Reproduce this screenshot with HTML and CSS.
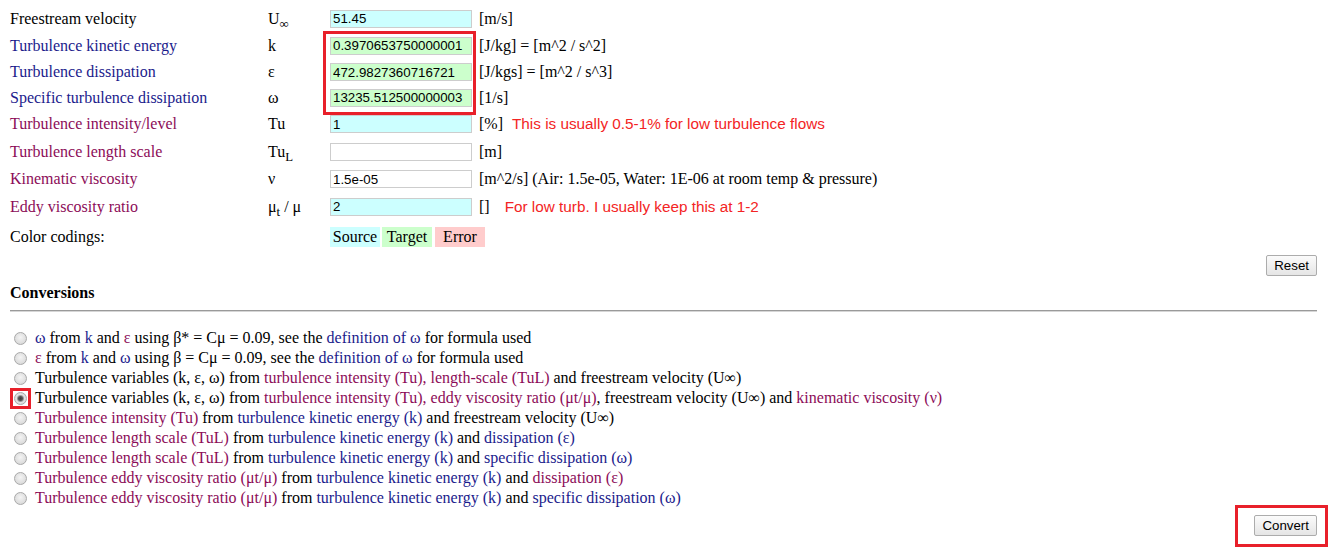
FILE: index.html
```html
<!DOCTYPE html>
<html lang="en">
  <head>
    <meta charset="UTF-8" />
    <meta name="viewport" content="width=device-width, initial-scale=1.0" />
    <title>Turbulence calculator</title>
    <link rel="stylesheet" href="styles.css">
  </head>
  <body>
    <div class="page">
      <div class="vars">
        <span>Freestream velocity</span>
        <span>U<sub>&infin;</sub></span>
        <span><input class="src" type="text" value="51.45"></span>
        <span>[m/s]</span>

        <span class="b">Turbulence kinetic energy</span>
        <span>k</span>
        <span><input class="tgt" type="text" value="0.3970653750000001"></span>
        <span>[J/kg] = [m^2 / s^2]</span>

        <span class="b">Turbulence dissipation</span>
        <span>&epsilon;</span>
        <span><input class="tgt" type="text" value="472.9827360716721"></span>
        <span>[J/kgs] = [m^2 / s^3]</span>

        <span class="b">Specific turbulence dissipation</span>
        <span>&omega;</span>
        <span><input class="tgt" type="text" value="13235.512500000003"></span>
        <span>[1/s]</span>

        <span class="m">Turbulence intensity/level</span>
        <span>Tu</span>
        <span><input class="src" type="text" value="1"></span>
        <span>[%] <span class="note">This is usually 0.5-1% for low turbulence flows</span></span>

        <span class="m">Turbulence length scale</span>
        <span>Tu<sub>L</sub></span>
        <span><input type="text" value=""></span>
        <span>[m]</span>

        <span class="m">Kinematic viscosity</span>
        <span>&nu;</span>
        <span><input type="text" value="1.5e-05"></span>
        <span>[m^2/s] (Air: 1.5e-05, Water: 1E-06 at room temp &amp; pressure)</span>

        <span class="m">Eddy viscosity ratio</span>
        <span>&mu;<sub>t</sub> / &mu;</span>
        <span><input class="src" type="text" value="2"></span>
        <span>[] <span class="note note-far">For low turb. I usually keep this at 1-2</span></span>

        <span>Color codings:</span>
        <span></span>
        <span class="legend">
          <span class="key src">Source</span>
          <span class="key tgt">Target</span>
          <span class="key err">Error</span>
        </span>
        <span></span>

        <!-- annotation box over the computed fields -->
        <div class="annot-fields"></div>
      </div>

      <div class="reset-row">
        <button>Reset</button>
      </div>

      <div class="heading">Conversions</div>
      <hr>

      <ul class="conv">
        <li><input type="radio" name="conv"><span><span class="b">&omega;</span> from <span class="b">k</span> and <span class="m">&epsilon;</span> using &beta;* = C&mu; = 0.09, see the <span class="b">definition of &omega;</span> for formula used</span></li>
        <li><input type="radio" name="conv"><span><span class="m">&epsilon;</span> from <span class="b">k</span> and <span class="b">&omega;</span> using &beta; = C&mu; = 0.09, see the <span class="b">definition of &omega;</span> for formula used</span></li>
        <li><input type="radio" name="conv"><span>Turbulence variables (k, &epsilon;, &omega;) from <span class="m">turbulence intensity (Tu), length-scale (TuL)</span> and freestream velocity (U&infin;)</span></li>
        <li><span class="annot-radio"><input type="radio" name="conv" checked></span><span>Turbulence variables (k, &epsilon;, &omega;) from <span class="m">turbulence intensity (Tu), eddy viscosity ratio (&mu;t/&mu;)</span>, freestream velocity (U&infin;) and <span class="m">kinematic viscosity (&nu;)</span></span></li>
        <li><input type="radio" name="conv"><span><span class="m">Turbulence intensity (Tu)</span> from <span class="b">turbulence kinetic energy (k)</span> and freestream velocity (U&infin;)</span></li>
        <li><input type="radio" name="conv"><span><span class="m">Turbulence length scale (TuL)</span> from <span class="b">turbulence kinetic energy (k)</span> and <span class="b">dissipation (&epsilon;)</span></span></li>
        <li><input type="radio" name="conv"><span><span class="m">Turbulence length scale (TuL)</span> from <span class="b">turbulence kinetic energy (k)</span> and <span class="b">specific dissipation (&omega;)</span></span></li>
        <li><input type="radio" name="conv"><span><span class="m">Turbulence eddy viscosity ratio (&mu;t/&mu;)</span> from <span class="b">turbulence kinetic energy (k)</span> and <span class="m">dissipation (&epsilon;)</span></span></li>
        <li><input type="radio" name="conv"><span><span class="m">Turbulence eddy viscosity ratio (&mu;t/&mu;)</span> from <span class="b">turbulence kinetic energy (k)</span> and <span class="b">specific dissipation (&omega;)</span></span></li>
      </ul>

      <div class="convert-row">
        <div class="annot-convert">
          <button>Convert</button>
        </div>
      </div>
    </div>
  </body>
</html>
```

FILE: styles.css
```css
body {
  margin: 0;
  font-family: "Liberation Serif", "Times New Roman", serif;
  font-size: 16px;
  color: #000;
  background: #fff;
}

.page {
  padding: 5px 16px 0 10px;
}

.b {
  color: #1b1b8c;
}

.m {
  color: #8c0c58;
}

/* variables table */
.vars {
  position: relative;
  display: grid;
  grid-template-columns: 258px 61px 150px 1fr;
  grid-template-rows: 27px 27px 26px 25px 28px 27px 28px 27px 34px;
  align-items: center;
  white-space: nowrap;
}

.vars sub {
  font-size: 0.8em;
  vertical-align: -0.3em;
  line-height: 0;
}

.vars input {
  display: block;
  width: 142px;
  height: 18px;
  box-sizing: border-box;
  margin: 0 0 0 1px;
  padding: 0 2px;
  border: 1px solid #cdcdcd;
  font-family: "Liberation Sans", Arial, sans-serif;
  font-size: 13.3px;
  color: #000;
  background: #fff;
}

.src {
  background: #ccffff !important;
}

.tgt {
  background: #ccffcc !important;
}

.err {
  background: #ffcccc;
}

.note {
  font-family: "Liberation Sans", Arial, sans-serif;
  font-size: 15.3px;
  color: #f32424;
  margin-left: 5px;
}

.note-far {
  margin-left: 11px;
}

.legend {
  display: flex;
  gap: 2px;
  margin-left: 1px;
}

.key {
  flex: none;
  display: inline-block;
  width: 50px;
  height: 20px;
  line-height: 20px;
  text-align: center;
}

.key.err {
  margin-left: 1px;
}

.annot-fields {
  position: absolute;
  left: 313px;
  top: 26px;
  width: 153px;
  height: 84px;
  box-sizing: border-box;
  border: 3px solid #e8202a;
  pointer-events: none;
}

/* buttons */
button {
  font-family: "Liberation Sans", Arial, sans-serif;
  font-size: 13.3px;
  color: #000;
  height: 21px;
  padding: 0 7px;
  border: 1px solid #acacac;
  border-radius: 2px;
  background: linear-gradient(#fbfbfb, #e5e5e5);
}

.reset-row {
  display: flex;
  justify-content: flex-end;
  margin-top: 1px;
}

.heading {
  font-weight: bold;
  margin-top: 8px;
  line-height: 18px;
}

hr {
  margin: 8px 0 0;
  height: 0;
  border: 0;
  border-top: 1px solid #9a9a9a;
  border-bottom: 1px solid #d6d6d6;
}

/* conversions list */
.conv {
  list-style: none;
  margin: 16px 0 0;
  padding: 0;
}

.conv li {
  display: flex;
  align-items: center;
  height: 20px;
  white-space: nowrap;
}

.conv input[type="radio"] {
  flex: none;
  appearance: none;
  width: 13px;
  height: 13px;
  margin: 0 8px 0 4px;
  border: 1px solid #a9a9a9;
  border-radius: 50%;
  box-sizing: border-box;
  background: radial-gradient(circle at 50% 40%, #f4f4f4 0, #dcdcdc 70%, #cfcfcf 100%);
}

.conv input[type="radio"]:checked {
  background: radial-gradient(circle at 50% 50%, #3c3c3c 0, #555 2px, #9a9a9a 3px, #e2e2e2 4px, #d0d0d0 100%);
}

.annot-radio {
  display: inline-flex;
  border: 3px solid #e8202a;
  padding: 1px;
  margin-right: 4px;
}

.conv .annot-radio input[type="radio"] {
  margin: 0;
}

.convert-row {
  display: flex;
  justify-content: flex-end;
  margin-top: -3px;
  margin-right: -11px;
}

.annot-convert {
  border: 3px solid #e8202a;
  padding: 7px 8px 8px 16px;
}
```
